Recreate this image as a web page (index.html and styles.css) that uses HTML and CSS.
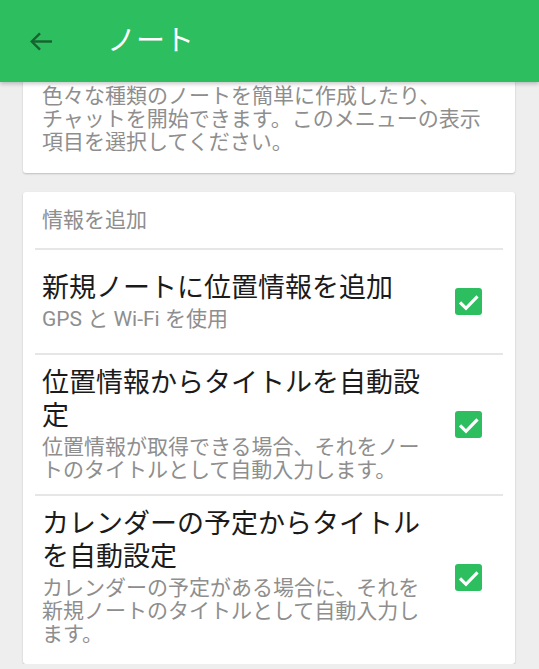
FILE: index.html
```html
<!DOCTYPE html>
<html lang="ja">
<head>
<meta charset="utf-8">
<title>ノート</title>
<link rel="stylesheet" href="styles.css">
</head>
<body>
<header class="appbar">
  <svg class="back" width="24" height="19" viewBox="0 0 24 19" aria-hidden="true">
    <path d="M23 9.5H3" stroke="currentColor" stroke-width="2.4" fill="none"/>
    <path d="M11 1.3L2.8 9.5 11 17.7" stroke="currentColor" stroke-width="2.4" fill="none"/>
  </svg>
  <h1 class="title">ノート</h1>
</header>
<main class="content">
  <section class="card intro">
    <p class="intro-text">色々な種類のノートを簡単に作成したり、<br>チャットを開始できます。このメニューの表示項目を選択してください。</p>
  </section>
  <section class="card">
    <div class="card-head">情報を追加</div>
    <div class="row">
      <div class="row-text">
        <div class="row-title">新規ノートに位置情報を追加</div>
        <div class="row-sub">GPS と Wi-Fi を使用</div>
      </div>
      <svg class="check" width="27" height="27" viewBox="0 0 27 27" aria-hidden="true"><rect width="27" height="27" rx="3" fill="#2dbe60"/><polyline points="5,14.3 11,20.3 22.5,8.3" fill="none" stroke="#fff" stroke-width="3.2"/></svg>
    </div>
    <div class="row">
      <div class="row-text">
        <div class="row-title">位置情報からタイトルを自動設定</div>
        <div class="row-sub">位置情報が取得できる場合、それをノートのタイトルとして自動入力します。</div>
      </div>
      <svg class="check" width="27" height="27" viewBox="0 0 27 27" aria-hidden="true"><rect width="27" height="27" rx="3" fill="#2dbe60"/><polyline points="5,14.3 11,20.3 22.5,8.3" fill="none" stroke="#fff" stroke-width="3.2"/></svg>
    </div>
    <div class="row">
      <div class="row-text">
        <div class="row-title">カレンダーの予定からタイトルを自動設定</div>
        <div class="row-sub">カレンダーの予定がある場合に、それを新規ノートのタイトルとして自動入力します。</div>
      </div>
      <svg class="check" width="27" height="27" viewBox="0 0 27 27" aria-hidden="true"><rect width="27" height="27" rx="3" fill="#2dbe60"/><polyline points="5,14.3 11,20.3 22.5,8.3" fill="none" stroke="#fff" stroke-width="3.2"/></svg>
    </div>
  </section>
</main>
</body>
</html>
```
FILE: styles.css
```css
* { box-sizing: border-box; }
html, body {
  margin: 0;
  padding: 0;
  background: #eeeeee;
  font-family: Roboto, "Noto Sans CJK JP", "Noto Sans", sans-serif;
  overflow: hidden;
}
.appbar {
  position: relative;
  z-index: 2;
  height: 82px;
  background: #2dbe60;
  display: flex;
  align-items: center;
  box-shadow: 0 2px 4px rgba(0,0,0,0.22);
}
.back {
  margin-left: 29px;
  color: #17622f;
  flex: none;
}
.title {
  margin: 0 0 0 54px;
  font-size: 29px;
  font-weight: 400;
  color: #ffffff;
  line-height: 1;
}
.content {
  padding: 0 24px 0 23px;
  display: flex;
  flex-direction: column;
  gap: 19px;
}
.card {
  background: #ffffff;
  border-radius: 3px;
  box-shadow: 0 1px 2px rgba(0,0,0,0.2);
}
.intro {
  margin-top: -30px;
  padding: 33px 19px 19px;
}
.intro-text {
  margin: 0;
  font-size: 21px;
  line-height: 23px;
  color: #8e8e8e;
}
.card-head {
  padding: 17px 19px 16px;
  font-size: 21px;
  line-height: 23px;
  color: #8e8e8e;
}
.card:last-child {
  padding-bottom: 6px;
}
.row {
  margin: 0 12px;
  border-top: 2px solid #e6e6e6;
  min-height: 105px;
  padding: 12px 21px 12px 7px;
  display: flex;
  align-items: center;
  gap: 27px;
}
.row-text {
  flex: 1;
  min-width: 0;
  display: flex;
  flex-direction: column;
  gap: 3px;
}
.row-title {
  font-size: 27px;
  line-height: 33px;
  color: #1b1b1b;
}
.row-sub {
  font-size: 21px;
  line-height: 23px;
  color: #8e8e8e;
}
.check {
  flex: none;
  display: block;
}
```
